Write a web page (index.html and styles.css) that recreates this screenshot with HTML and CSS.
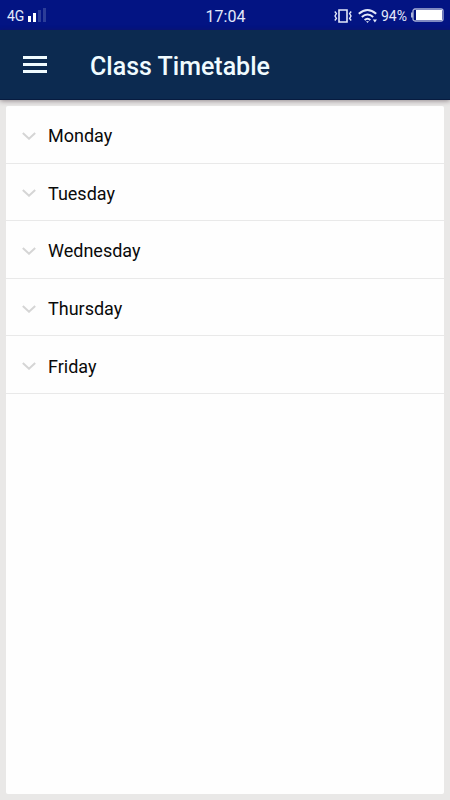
FILE: index.html
```html
<!DOCTYPE html>
<html lang="en">
<head>
<meta charset="utf-8">
<meta name="viewport" content="width=device-width, initial-scale=1">
<title>Class Timetable</title>
<link rel="stylesheet" href="styles.css">
</head>
<body>
<div class="status">
  <div class="status-side">
    <span class="network">4G</span>
    <svg class="signal" width="20" height="16" viewBox="0 0 20 16" aria-hidden="true">
      <path fill="#fff" d="M1 9h3v6H1zM6 6h3v9H6z"/>
      <path fill="#2c3d98" d="M11 3h3v12h-3zM16 1h3v14h-3z"/>
    </svg>
  </div>
  <time class="clock">17:04</time>
  <div class="status-side status-right">
    <svg width="18" height="16" viewBox="0 0 18 16" fill="none" stroke="#e4e9fa" aria-hidden="true">
      <path stroke-width="1.6" d="M5 2h8v12H5z"/>
      <path stroke-width="1.4" d="M.8 3.5l1.6 2L1 8l1.4 2.5-1.6 2M17.2 3.5l-1.6 2L17 8l-1.4 2.5 1.6 2"/>
    </svg>
    <svg class="wifi" width="20" height="16" viewBox="0 0 20 16" fill="none" stroke="#e4e9fa" stroke-width="2" aria-hidden="true">
      <path d="M.8 5.8Q9.500-1.800 18.200 5.800M3.800 9Q9.500 4 15.200 9M6.600 12Q9.500 9.500 12.400 12"/>
      <path fill="#e4e9fa" stroke="none" d="M8 13.200h3l-1.500 1.800zM14.800 11.500h4.200l-2.100 3z"/>
    </svg>
    <span class="percent">94%</span>
    <svg class="battery" width="33" height="14" viewBox="0 0 33 14" aria-hidden="true">
      <path fill="#aab2d8" d="M0 4.500h2v5H0z"/>
      <rect x="2" y="1" width="30" height="12" rx="2" fill="#02107c" stroke="#aab2d8" stroke-width="1.300"/>
      <path fill="#fff" d="M5 2h26v10H5z"/>
    </svg>
  </div>
</div>
<header class="appbar">
  <button class="menu" type="button" aria-label="Menu">
    <svg width="24" height="18" viewBox="0 0 24 18" fill="#f0fbff" aria-hidden="true">
      <path d="M0 0h24v3H0zM0 7h24v3H0zM0 14h24v3H0z"/>
    </svg>
  </button>
  <h1 class="title">Class Timetable</h1>
</header>
<main class="page">
  <div class="card">
    <div class="days">
      <button class="day" type="button"><svg class="chevron" viewBox="0 0 14 8" aria-hidden="true"><path d="M.8 1L7 6.700 13.200 1"/></svg>Monday</button>
      <button class="day" type="button"><svg class="chevron" viewBox="0 0 14 8" aria-hidden="true"><path d="M.8 1L7 6.700 13.200 1"/></svg>Tuesday</button>
      <button class="day" type="button"><svg class="chevron" viewBox="0 0 14 8" aria-hidden="true"><path d="M.8 1L7 6.700 13.200 1"/></svg>Wednesday</button>
      <button class="day" type="button"><svg class="chevron" viewBox="0 0 14 8" aria-hidden="true"><path d="M.8 1L7 6.700 13.200 1"/></svg>Thursday</button>
      <button class="day" type="button"><svg class="chevron" viewBox="0 0 14 8" aria-hidden="true"><path d="M.8 1L7 6.700 13.200 1"/></svg>Friday</button>
    </div>
  </div>
</main>
</body>
</html>
```
FILE: styles.css
```css
* {
  box-sizing: border-box;
}

body {
  margin: 0;
  min-height: 100vh;
  display: flex;
  flex-direction: column;
  background: #e9e8e7;
  font-family: Roboto, "Liberation Sans", sans-serif;
}

.status {
  display: grid;
  grid-template-columns: 1fr auto 1fr;
  align-items: center;
  height: 30px;
  padding: 2px 6px 0 7px;
  background: #031483;
  color: #e4e9fa;
}

.status-side {
  display: flex;
  align-items: center;
  font-size: 14px;
}

.status-right {
  justify-content: flex-end;
}

.signal {
  margin: 0 0 2px 3px;
}

.clock {
  font-size: 16px;
}

.wifi {
  margin: 0 3px 0 6px;
}

.battery {
  margin: 0 0 2px 4px;
}

.appbar {
  position: relative;
  display: flex;
  align-items: center;
  gap: 43px;
  height: 70px;
  padding: 0 23px;
  background: #0c2a50;
  border-bottom: 1px solid #071b40;
  box-shadow: 0 1px 5px rgba(40, 20, 30, 0.45);
}

.menu {
  display: flex;
  padding: 0;
  border: 0;
  background: none;
}

.title {
  margin: 0;
  padding-top: 5px;
  color: #f0fbff;
  font-size: 25px;
  font-weight: 500;
  line-height: 32px;
}

.page {
  flex: 1;
  display: flex;
  padding: 6px;
}

.card {
  flex: 1;
  background: #fefefe;
  border-radius: 2px;
}

.days {
  display: grid;
  grid-template-rows: repeat(5, 1fr);
  height: 288px;
}

.day {
  display: flex;
  align-items: center;
  gap: 12px;
  padding: 3px 16px 0;
  border: 0;
  border-bottom: 1px solid #e9e9e9;
  background: none;
  color: #0a0a0a;
  font-family: inherit;
  font-size: 18px;
  text-align: left;
}

.chevron {
  width: 14px;
  height: 8px;
  fill: none;
  stroke: #d5d5d5;
  stroke-width: 2;
}
```
